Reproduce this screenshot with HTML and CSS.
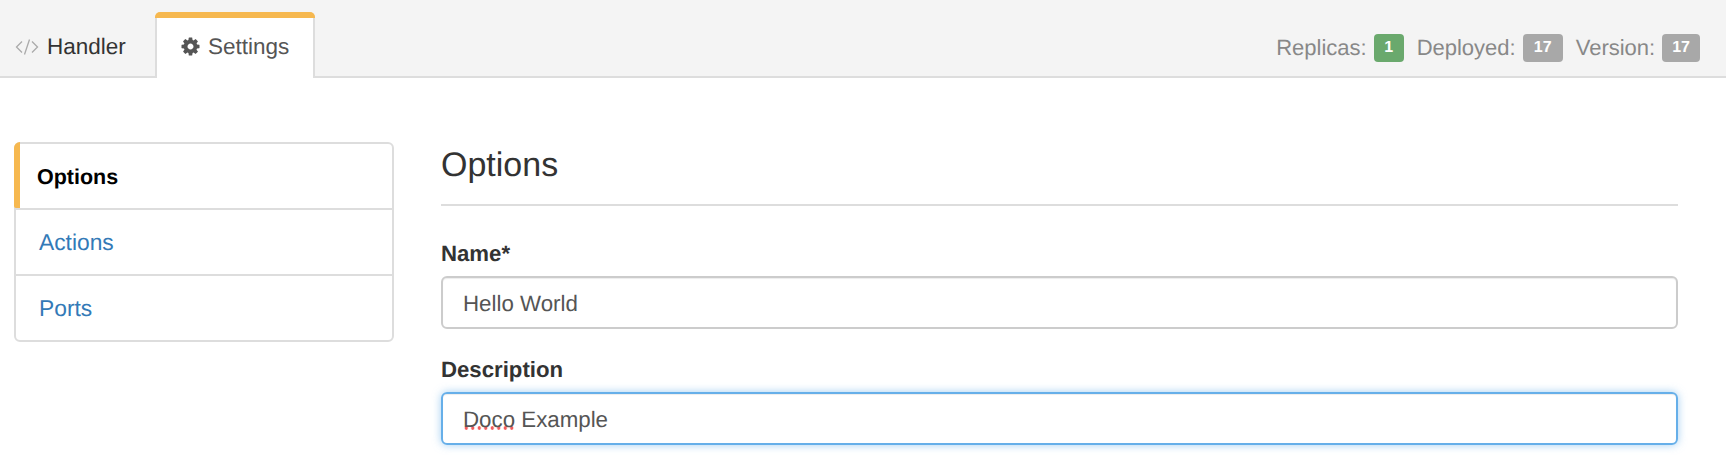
FILE: index.html
```html
<!DOCTYPE html>
<html lang="en">
<head>
<meta charset="utf-8">
<title>Settings</title>
<link rel="stylesheet" href="styles.css">
</head>
<body>
<header class="tabbar">
  <nav class="tabs">
    <a class="tab">
      <svg class="icon-code" viewBox="0 0 24 20" aria-hidden="true"><path d="M7 4.500 1.500 10 7 15.500M17 4.500 22.500 10 17 15.500M14.500 2.500 9.500 17.500"/></svg>
      Handler
    </a>
    <a class="tab tab-active">
      <svg class="icon-cog" viewBox="0 0 1792 1792" aria-hidden="true"><path d="M1152 896q0-106-75-181t-181-75-181 75-75 181 75 181 181 75 181-75 75-181zm512-109v222q0 12-8 23t-20 13l-185 28q-19 54-39 91 35 50 107 138 10 12 10 25t-9 23q-27 37-99 108t-94 71q-12 0-26-9l-138-108q-44 23-91 38-16 136-29 186-7 28-36 28h-222q-14 0-24.500-8.500t-11.500-21.500l-28-184q-49-16-90-37l-141 107q-10 9-25 9-14 0-25-11-126-114-165-168-7-10-7-23 0-12 8-23 15-21 51-66.500t54-70.500q-27-50-41-99l-183-27q-13-2-21-12.500t-8-23.500v-222q0-12 8-23t19-13l186-28q14-46 39-92-40-57-107-138-10-12-10-24 0-10 9-23 26-36 98.500-107.500t94.500-71.500q13 0 26 10l138 107q44-23 91-38 16-136 29-186 7-28 36-28h222q14 0 24.500 8.500t11.500 21.500l28 184q49 16 90 37l142-107q9-9 24-9 13 0 25 10 129 119 165 170 7 8 7 22 0 12-8 23-15 21-51 66.500t-54 70.500q26 50 41 98l183 28q13 2 21 12.500t8 23.500z"/></svg>
      Settings
    </a>
  </nav>
  <div class="status">
    <span class="stat">Replicas: <span class="badge badge-green">1</span></span>
    <span class="stat">Deployed: <span class="badge badge-wide">17</span></span>
    <span class="stat">Version: <span class="badge">17</span></span>
  </div>
</header>
<main class="content">
  <aside class="side">
    <a class="side-item side-active">Options</a>
    <a class="side-item">Actions</a>
    <a class="side-item">Ports</a>
  </aside>
  <section class="panel">
    <h2 class="title">Options</h2>
    <div class="field">
      <div class="label">Name*</div>
      <div class="control">Hello World</div>
    </div>
    <div class="field">
      <div class="label">Description</div>
      <div class="control control-focus"><span class="misspelt">Doco</span> Example</div>
    </div>
  </section>
</main>
</body>
</html>
```
FILE: styles.css
```css
* { box-sizing: border-box; }
html, body { margin: 0; height: 470px; overflow: hidden; background: #fff; }
body {
  font-family: "Liberation Sans", Arial, sans-serif;
  font-size: 22px;
  color: #333;
  text-rendering: geometricPrecision;
}

.tabbar {
  height: 78px;
  background: #f4f4f4;
  border-bottom: 2px solid #ddd;
  display: flex;
  justify-content: space-between;
  padding-right: 26px;
}
.tabs { display: flex; padding-top: 12px; font-size: 22.500px; }
.tab {
  position: relative;
  width: 155px;
  height: 66px;
  display: flex;
  align-items: center;
  gap: 8px;
  padding: 3px 0 0 15px;
  color: #333;
}
.tab-active {
  width: 160px;
  padding: 3px 0 0 23px;
  color: #555;
  background: #fff;
  border: 2px solid #ddd;
  border-top: 0;
  border-bottom: 0;
  border-radius: 6px 6px 0 0;
  gap: 7px;
}
.tab-active::before {
  content: "";
  position: absolute;
  top: 0;
  left: -2px;
  right: -2px;
  height: 6px;
  background: #f6b84f;
  border-radius: 5px 5px 0 0;
}
.icon-code { width: 24px; height: 20px; fill: none; stroke: #aaa; stroke-width: 1.3; }
.icon-cog { width: 21px; height: 21px; fill: #555; }

.status { display: flex; align-items: center; gap: 13px; padding-top: 20px; color: #888; }
.stat { display: flex; align-items: center; gap: 7px; }
.badge {
  height: 28px;
  min-width: 30px;
  padding: 0 10px;
  display: flex;
  align-items: center;
  justify-content: center;
  background: #a8a8a8;
  color: #fff;
  font-size: 16px;
  font-weight: 700;
  border-radius: 4px;
}
.badge-wide { min-width: 40px; }
.badge-green { background: #6aa96d; }

.content { display: flex; align-items: flex-start; gap: 47px; padding: 64px 48px 0 14px; }
.side {
  width: 380px;
  flex: none;
  border: 2px solid #ddd;
  border-radius: 6px;
  font-size: 22.800px;
}
.side-item {
  position: relative;
  display: flex;
  align-items: center;
  height: 66px;
  padding: 0 0 0 23px;
  color: #337ab7;
  border-top: 2px solid #ddd;
}
.side-item:first-child { border-top: 0; height: 64px; padding-top: 2px; }
.side-active {
  color: #000;
  font-weight: 700;
  font-size: 21.500px;
  padding-left: 21px;
}
.side-active::before {
  content: "";
  position: absolute;
  top: -2px;
  bottom: 0;
  left: -2px;
  width: 6px;
  background: #f6b84f;
  border-radius: 6px 0 0 2px;
}

.panel { flex: 1; }
.title {
  margin: 0;
  height: 64px;
  padding-top: 2px;
  font-size: 34px;
  font-weight: 400;
  line-height: 42px;
  border-bottom: 2px solid #ddd;
}
.field { margin-bottom: 24px; }
.title + .field { margin-top: 31px; }
.label { font-weight: 700; font-size: 22.200px; line-height: 33px; margin-bottom: 7px; height: 32px; }
.control {
  height: 53px;
  padding: 2px 0 0 20px;
  display: flex;
  align-items: center;
  white-space: pre;
  font-size: 22.300px;
  color: #555;
  border: 2px solid #ccc;
  border-radius: 6px;
  box-shadow: inset 0 1px 1px rgba(0,0,0,.075);
}
.control-focus {
  border-color: #66afe9;
  box-shadow: inset 0 1px 1px rgba(0,0,0,.075), 0 0 9px rgba(102,175,233,.6);
}
.misspelt {
  background: radial-gradient(circle at center, #f25c5c 1.500px, transparent 2px) 0 19px / 6.500px 4px repeat-x;
}
```
